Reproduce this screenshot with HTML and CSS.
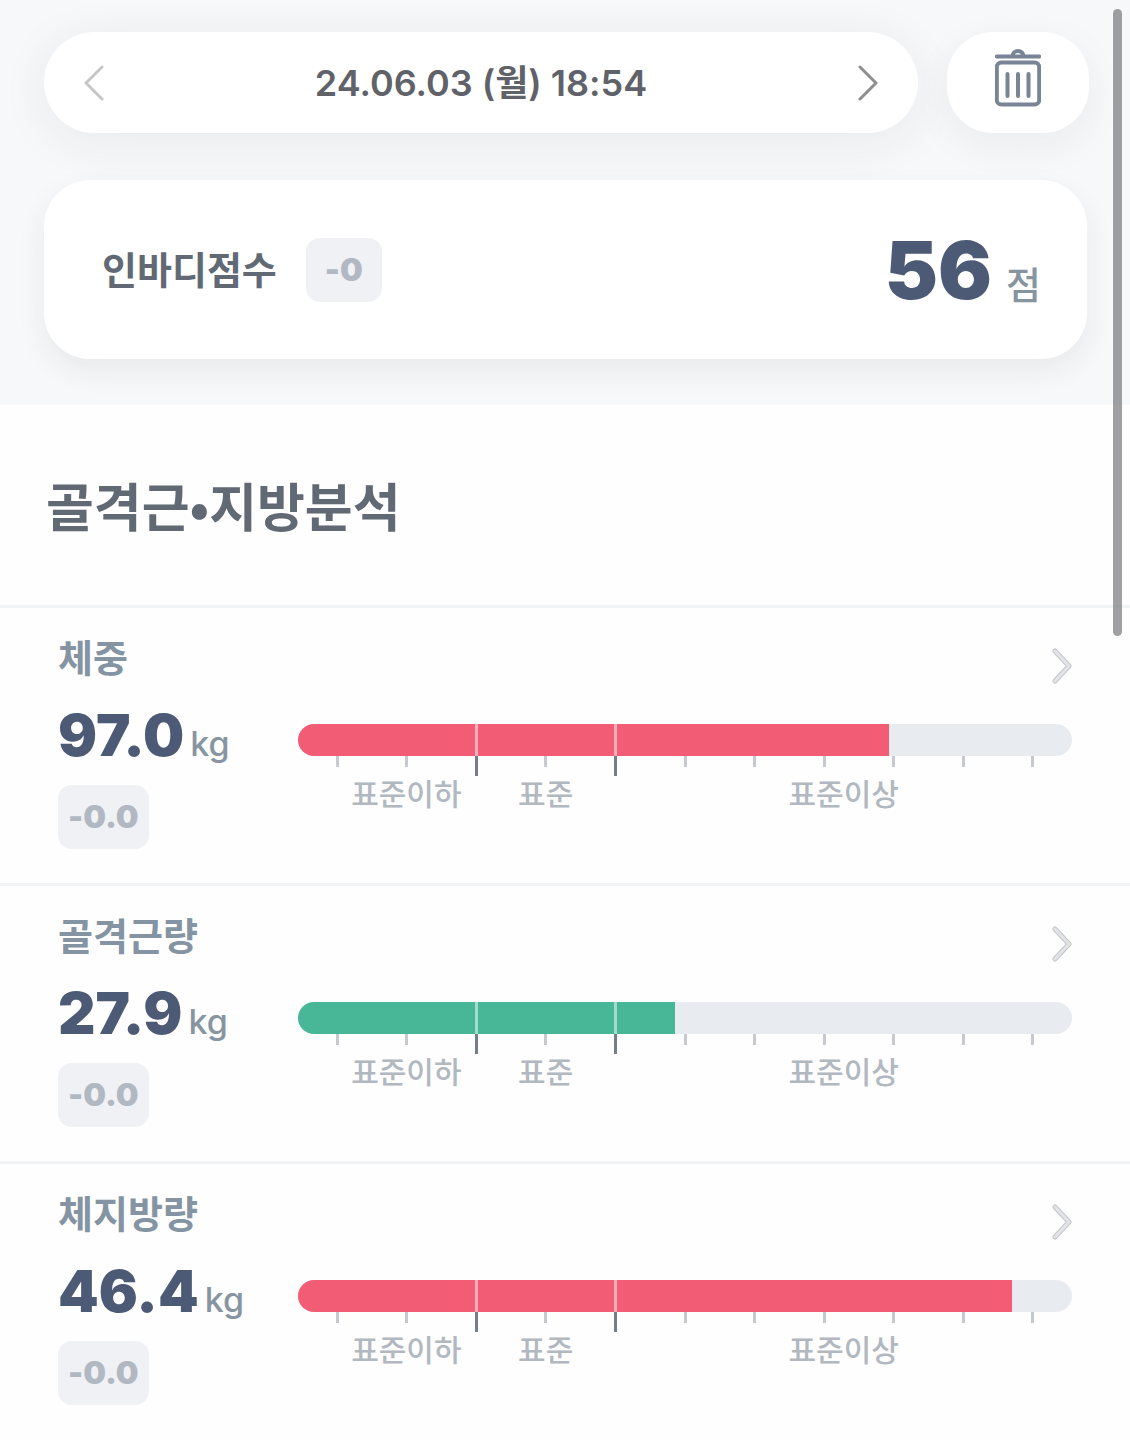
FILE: index.html
```html
<!DOCTYPE html>
<html lang="ko">
<head>
<meta charset="utf-8">
<meta name="viewport" content="width=device-width, initial-scale=1">
<title>인바디 결과</title>
<link rel="stylesheet" href="styles.css">
</head>
<body>
<header class="summary">
  <div class="toolbar">
    <nav class="date-picker" aria-label="측정 날짜">
      <button class="icon-button arrow-prev" type="button" aria-label="이전 측정">
        <svg width="20" height="36" viewBox="0 0 20 36"><path d="M18 2 2 18l16 16"/></svg>
      </button>
      <time class="date" datetime="2024-06-03T18:54">24.06.03 (월) 18:54</time>
      <button class="icon-button arrow-next" type="button" aria-label="다음 측정">
        <svg width="20" height="36" viewBox="0 0 20 36"><path d="m2 2 16 16L2 34"/></svg>
      </button>
    </nav>
    <button class="delete-button" type="button" aria-label="삭제">
      <svg width="46" height="58" viewBox="0 0 46 58">
        <rect x="1.8" y="13.500" width="42.400" height="42" rx="4.500"/>
        <path d="M1.800 7.500h42.400M17.500 7a5.500 5 0 0 1 11 0M12.500 25v22M23 25v22M33.500 25v22"/>
      </svg>
    </button>
  </div>
  <section class="score-card">
    <h2 class="score-label">인바디점수</h2>
    <span class="badge badge-score">-0</span>
    <p class="score"><strong class="score-value">56</strong><span class="score-unit">점</span></p>
  </section>
</header>

<main>
  <h1 class="section-title">골격근•지방분석</h1>

  <section class="metric">
    <div class="metric-head">
      <h2 class="metric-name">체중</h2>
      <button class="icon-button metric-more" type="button" aria-label="체중 상세">
        <svg width="20" height="36" viewBox="0 0 20 36"><path class="edge" d="m3 3 14 15L3 33"/><path class="core" d="m3 3 14 15L3 33"/></svg>
      </button>
    </div>
    <div class="metric-body">
      <div class="reading">
        <p class="amount"><strong class="value">97.0</strong><span class="unit">kg</span></p>
        <span class="badge">-0.0</span>
      </div>
      <div class="gauge">
        <div class="track"><div class="fill fill-over" style="width:76.4%"></div><i class="divider divider-low"></i><i class="divider divider-high"></i></div>
        <div class="ticks"><i></i><i></i><i class="major"></i><i></i><i class="major"></i><i></i><i></i><i></i><i></i><i></i><i></i></div>
        <div class="ranges"><span>표준이하</span><span>표준</span><span>표준이상</span></div>
      </div>
    </div>
  </section>

  <section class="metric">
    <div class="metric-head">
      <h2 class="metric-name">골격근량</h2>
      <button class="icon-button metric-more" type="button" aria-label="골격근량 상세">
        <svg width="20" height="36" viewBox="0 0 20 36"><path class="edge" d="m3 3 14 15L3 33"/><path class="core" d="m3 3 14 15L3 33"/></svg>
      </button>
    </div>
    <div class="metric-body">
      <div class="reading">
        <p class="amount"><strong class="value">27.9</strong><span class="unit">kg</span></p>
        <span class="badge">-0.0</span>
      </div>
      <div class="gauge">
        <div class="track"><div class="fill fill-good" style="width:48.7%"></div><i class="divider divider-low"></i><i class="divider divider-high"></i></div>
        <div class="ticks"><i></i><i></i><i class="major"></i><i></i><i class="major"></i><i></i><i></i><i></i><i></i><i></i><i></i></div>
        <div class="ranges"><span>표준이하</span><span>표준</span><span>표준이상</span></div>
      </div>
    </div>
  </section>

  <section class="metric">
    <div class="metric-head">
      <h2 class="metric-name">체지방량</h2>
      <button class="icon-button metric-more" type="button" aria-label="체지방량 상세">
        <svg width="20" height="36" viewBox="0 0 20 36"><path class="edge" d="m3 3 14 15L3 33"/><path class="core" d="m3 3 14 15L3 33"/></svg>
      </button>
    </div>
    <div class="metric-body">
      <div class="reading">
        <p class="amount"><strong class="value">46.4</strong><span class="unit">kg</span></p>
        <span class="badge">-0.0</span>
      </div>
      <div class="gauge">
        <div class="track"><div class="fill fill-over" style="width:92.2%"></div><i class="divider divider-low"></i><i class="divider divider-high"></i></div>
        <div class="ticks"><i></i><i></i><i class="major"></i><i></i><i class="major"></i><i></i><i></i><i></i><i></i><i></i><i></i></div>
        <div class="ranges"><span>표준이하</span><span>표준</span><span>표준이상</span></div>
      </div>
    </div>
  </section>
</main>
<div class="scroll-thumb"></div>
</body>
</html>
```
FILE: styles.css
```css
* {
  box-sizing: border-box;
}

html {
  scrollbar-width: none;
}

body {
  margin: 0;
  background: #fefefe;
  color: #616a74;
  font-family: Inter, "Noto Sans CJK KR", sans-serif;
}

h1,
h2,
p {
  margin: 0;
}

button {
  border: 0;
  padding: 0;
  cursor: pointer;
}

svg {
  display: block;
  fill: none;
  stroke-linecap: round;
  stroke-linejoin: round;
}

/* Summary */

.summary {
  display: flex;
  flex-direction: column;
  gap: 47px;
  padding: 32px 41px 46px 44px;
  background: #f6f8fa;
}

.toolbar {
  display: flex;
  gap: 29px;
}

.date-picker {
  display: flex;
  flex: 1;
  align-items: center;
  justify-content: space-between;
  height: 101px;
  padding: 0 40px;
  border-radius: 51px;
  background: #fff;
  box-shadow: 0 8px 50px rgba(40, 40, 40, 0.07);
}

.icon-button {
  background: none;
}

.arrow-prev svg {
  stroke: #c6c6c7;
  stroke-width: 3;
}

.arrow-next svg {
  stroke: #8e8e90;
  stroke-width: 3;
}

.date {
  color: #5f6268;
  font-size: 36px;
  font-weight: 600;
  line-height: 48px;
}

.delete-button {
  display: flex;
  align-items: center;
  justify-content: center;
  width: 142px;
  padding-bottom: 10px;
  border-radius: 46px;
  background: #fff;
  box-shadow: 0 12px 40px rgba(40, 40, 40, 0.06);
}

.delete-button svg {
  stroke: #798496;
  stroke-width: 4;
}

.score-card {
  display: flex;
  align-items: center;
  height: 179px;
  margin-right: 2px;
  padding: 0 46px 0 58px;
  border-radius: 46px;
  background: #fff;
  box-shadow: 0 12px 30px rgba(40, 40, 40, 0.07);
}

.score-label {
  font-size: 38px;
  font-weight: 700;
  line-height: 56px;
}

.badge {
  display: inline-block;
  padding: 0 10px;
  border-radius: 14px;
  background: #eff1f5;
  color: #b1b8c2;
  font-size: 32px;
  font-weight: 900;
  font-feature-settings: "calt" 0;
  line-height: 64px;
}

.badge-score {
  margin-left: 29px;
  padding: 0 19px;
}

.score {
  display: flex;
  align-items: baseline;
  gap: 14px;
  margin-left: auto;
}

.score-value {
  color: #4c5a75;
  font-size: 80px;
  font-weight: 900;
  line-height: 96px;
}

.score-unit {
  color: #8795a1;
  font-size: 38px;
  font-weight: 500;
}

/* Analysis */

.section-title {
  padding: 68px 46px;
  font-family: "Noto Sans CJK KR", sans-serif;
  font-size: 52px;
  font-weight: 700;
  line-height: 64px;
}

.metric {
  height: 278px;
  padding: 24px 58px 0;
  border-top: 3px solid #f2f3f4;
}

.metric:last-child {
  box-shadow: 0 3px #f2f3f4;
}

.metric-head {
  display: flex;
  align-items: flex-start;
  justify-content: space-between;
  height: 72px;
}

.metric-name {
  color: #8494a2;
  font-size: 38px;
  font-weight: 700;
  line-height: 52px;
}

.metric-more {
  height: 68px;
}

.metric-more .edge {
  stroke: #c3c5c9;
  stroke-width: 5;
}

.metric-more .core {
  stroke: #e3e4e7;
  stroke-width: 3;
}

.metric-body {
  display: grid;
  grid-template-columns: 240px 1fr;
}

.reading {
  display: flex;
  flex-direction: column;
  align-items: flex-start;
  gap: 17px;
}

.amount {
  display: flex;
  align-items: baseline;
  gap: 6px;
  height: 64px;
  line-height: 62px;
}

.value {
  color: #4c5a75;
  font-size: 58px;
  font-weight: 900;
}

.unit {
  color: #8795a1;
  font-size: 34px;
  font-weight: 500;
}

.gauge {
  padding-top: 20px;
}

.track {
  position: relative;
  height: 32px;
  overflow: hidden;
  border-radius: 16px;
  background: #e8ebf0;
}

.fill {
  height: 100%;
}

.fill-over {
  background: #f25c74;
}

.fill-good {
  background: #48b798;
}

.divider {
  position: absolute;
  top: 0;
  width: 3px;
  height: 100%;
  margin-left: -1px;
  background: rgba(255, 255, 255, 0.5);
}

.divider-low {
  left: 23%;
}

.divider-high {
  left: 41%;
}

.ticks {
  display: flex;
  justify-content: space-between;
  height: 20px;
  padding: 0 calc(5% - 1px);
}

.ticks i {
  width: 3px;
  height: 11px;
  background: #c6cad0;
}

.ticks .major {
  height: 20px;
  background: #737e8c;
}

.ranges {
  display: grid;
  grid-template-columns: 18fr 18fr 59fr;
  padding-left: 5%;
  color: #b1b8c0;
  font-size: 30px;
  font-weight: 500;
  line-height: 36px;
  text-align: center;
}

.scroll-thumb {
  position: fixed;
  top: 9px;
  right: 8px;
  width: 9px;
  height: 627px;
  border-radius: 5px;
  background: rgba(120, 120, 122, 0.7);
}
```
